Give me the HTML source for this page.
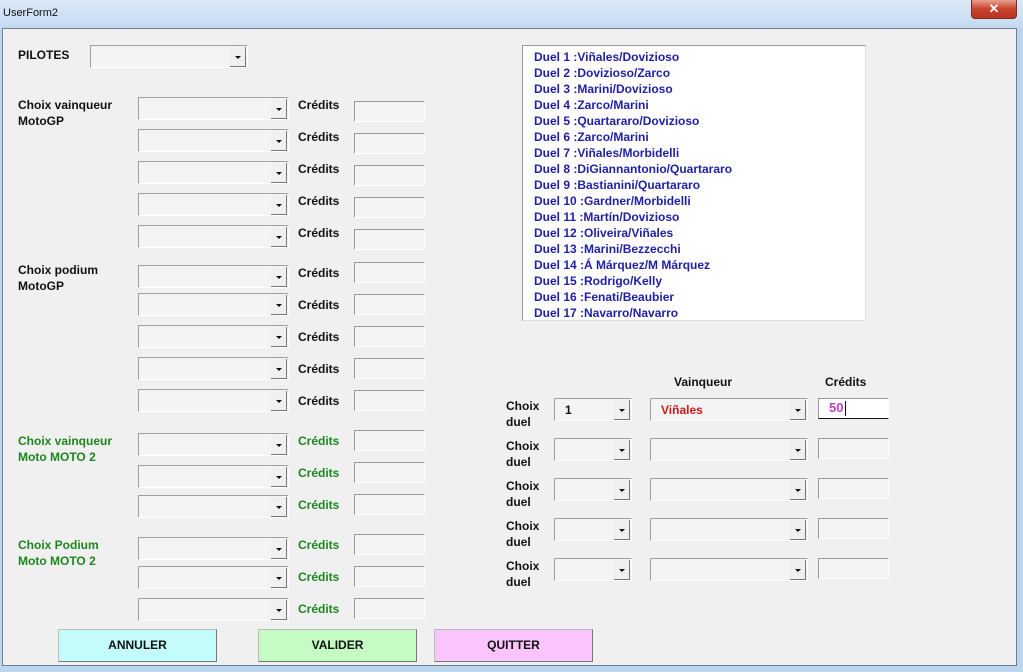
<!DOCTYPE html>
<html><head><meta charset="utf-8"><style>
*{margin:0;padding:0;box-sizing:border-box}
body{width:1023px;height:672px;overflow:hidden;background:#bcd6ee;font-family:"Liberation Sans",sans-serif;position:relative}
.tb{position:absolute;left:0;top:0;width:1023px;height:28px;background:linear-gradient(#dce9f7,#c4daf1)}
.tt{position:absolute;left:3px;top:7px;font-size:11px;color:#111}
.x{position:absolute;left:971px;top:0;width:46px;height:19px;background:linear-gradient(#e8a090,#c8432c 50%,#b83520);border:1px solid #7a2a20;border-top:none;border-radius:0 0 4px 4px;color:#fff;font-weight:bold;font-size:13px;text-align:center;line-height:17px}
.f{position:absolute;left:2px;top:28px;width:1015px;height:638px;background:#f0f0f0;border:1px solid #6e7f92}
.l{position:absolute;font-weight:bold;font-size:12px;color:#111;line-height:16px}
.g{color:#1d861d}
.c{position:absolute;height:23px;background:#f4f4f4;border-top:1px solid #a0a0a0;border-left:1px solid #a0a0a0;border-bottom:1px solid #fff;border-right:1px solid #fff}
.c::after{content:"";position:absolute;right:1px;top:1px;width:15px;height:19px;background:#f0f0f0;border-right:1px solid #777;border-bottom:1px solid #777}
.c::before{content:"";position:absolute;right:6px;top:10px;border-left:3px solid transparent;border-right:3px solid transparent;border-top:3px solid #111;z-index:2}
.t{position:absolute;width:71px;height:21px;background:#f4f4f4;border-top:1px solid #999;border-left:1px solid #999;border-bottom:1px solid #fff;border-right:1px solid #fff}
.lb{position:absolute;left:519px;top:16px;width:344px;height:276px;background:#fff;border:1px solid #999;border-right-color:#ddd;border-bottom-color:#ddd;padding:3px 0 0 11px}
.lb div{font-weight:bold;font-size:12px;color:#1e1ea6;line-height:16px;white-space:nowrap}
.b{position:absolute;top:600px;width:159px;height:33px;border:1px solid #bbb;border-right-color:#777;border-bottom-color:#777;font-weight:bold;font-size:12px;text-align:center;line-height:31px;color:#111}
</style></head><body>
<div class="tb"><div class="tt">UserForm2</div><div class="x">✕</div></div>
<div class="f">
<div class="l" style="left:15px;top:18px">PILOTES</div>
<div class="c" style="left:87px;top:16px;width:158px"></div>

<div class="l" style="left:15px;top:68px">Choix vainqueur<br>MotoGP</div>
<div class="l" style="left:15px;top:233px">Choix podium<br>MotoGP</div>
<div class="l g" style="left:15px;top:404px">Choix vainqueur<br>Moto MOTO 2</div>
<div class="l g" style="left:15px;top:508px">Choix Podium<br>Moto MOTO 2</div>

<div class="c" style="left:135px;top:68px;width:151px"></div><div class="l" style="left:295px;top:68px">Crédits</div><div class="t" style="left:351px;top:72px"></div>
<div class="c" style="left:135px;top:100px;width:151px"></div><div class="l" style="left:295px;top:100px">Crédits</div><div class="t" style="left:351px;top:104px"></div>
<div class="c" style="left:135px;top:132px;width:151px"></div><div class="l" style="left:295px;top:132px">Crédits</div><div class="t" style="left:351px;top:136px"></div>
<div class="c" style="left:135px;top:164px;width:151px"></div><div class="l" style="left:295px;top:164px">Crédits</div><div class="t" style="left:351px;top:168px"></div>
<div class="c" style="left:135px;top:196px;width:151px"></div><div class="l" style="left:295px;top:196px">Crédits</div><div class="t" style="left:351px;top:200px"></div>

<div class="c" style="left:135px;top:236px;width:151px"></div><div class="l" style="left:295px;top:236px">Crédits</div><div class="t" style="left:351px;top:233px"></div>
<div class="c" style="left:135px;top:264px;width:151px"></div><div class="l" style="left:295px;top:268px">Crédits</div><div class="t" style="left:351px;top:265px"></div>
<div class="c" style="left:135px;top:296px;width:151px"></div><div class="l" style="left:295px;top:300px">Crédits</div><div class="t" style="left:351px;top:297px"></div>
<div class="c" style="left:135px;top:328px;width:151px"></div><div class="l" style="left:295px;top:332px">Crédits</div><div class="t" style="left:351px;top:329px"></div>
<div class="c" style="left:135px;top:360px;width:151px"></div><div class="l" style="left:295px;top:364px">Crédits</div><div class="t" style="left:351px;top:361px"></div>

<div class="c" style="left:135px;top:404px;width:151px"></div><div class="l g" style="left:295px;top:404px">Crédits</div><div class="t" style="left:351px;top:401px"></div>
<div class="c" style="left:135px;top:436px;width:151px"></div><div class="l g" style="left:295px;top:436px">Crédits</div><div class="t" style="left:351px;top:433px"></div>
<div class="c" style="left:135px;top:466px;width:151px"></div><div class="l g" style="left:295px;top:468px">Crédits</div><div class="t" style="left:351px;top:465px"></div>

<div class="c" style="left:135px;top:508px;width:151px"></div><div class="l g" style="left:295px;top:508px">Crédits</div><div class="t" style="left:351px;top:505px"></div>
<div class="c" style="left:135px;top:537px;width:151px"></div><div class="l g" style="left:295px;top:540px">Crédits</div><div class="t" style="left:351px;top:537px"></div>
<div class="c" style="left:135px;top:569px;width:151px"></div><div class="l g" style="left:295px;top:572px">Crédits</div><div class="t" style="left:351px;top:569px"></div>

<div class="lb">
<div>Duel 1 :Viñales/Dovizioso</div><div>Duel 2 :Dovizioso/Zarco</div><div>Duel 3 :Marini/Dovizioso</div><div>Duel 4 :Zarco/Marini</div><div>Duel 5 :Quartararo/Dovizioso</div><div>Duel 6 :Zarco/Marini</div><div>Duel 7 :Viñales/Morbidelli</div><div>Duel 8 :DiGiannantonio/Quartararo</div><div>Duel 9 :Bastianini/Quartararo</div><div>Duel 10 :Gardner/Morbidelli</div><div>Duel 11 :Martín/Dovizioso</div><div>Duel 12 :Oliveira/Viñales</div><div>Duel 13 :Marini/Bezzecchi</div><div>Duel 14 :Á Márquez/M Márquez</div><div>Duel 15 :Rodrigo/Kelly</div><div>Duel 16 :Fenati/Beaubier</div><div>Duel 17 :Navarro/Navarro</div>
</div>

<div class="l" style="left:671px;top:345px">Vainqueur</div>
<div class="l" style="left:822px;top:345px">Crédits</div>

<div class="l" style="left:503px;top:369px">Choix<br>duel</div>
<div class="c" style="left:551px;top:369px;width:78px"><span class="l" style="left:10px;top:3px">1</span></div>
<div class="c" style="left:647px;top:369px;width:158px"><span class="l" style="left:10px;top:3px;color:#d01818">Viñales</span></div>
<div class="t" style="left:815px;top:369px;width:71px;background:#fff;border-bottom:1px solid #111"><span class="l" style="left:10px;top:1px;color:#c040c0;font-weight:bold;font-size:13px">50</span><span style="position:absolute;left:26px;top:2px;width:1px;height:15px;background:#111"></span></div>

<div class="l" style="left:503px;top:409px">Choix<br>duel</div>
<div class="c" style="left:551px;top:409px;width:78px"></div><div class="c" style="left:647px;top:409px;width:158px"></div><div class="t" style="left:815px;top:409px"></div>
<div class="l" style="left:503px;top:449px">Choix<br>duel</div>
<div class="c" style="left:551px;top:449px;width:78px"></div><div class="c" style="left:647px;top:449px;width:158px"></div><div class="t" style="left:815px;top:449px"></div>
<div class="l" style="left:503px;top:489px">Choix<br>duel</div>
<div class="c" style="left:551px;top:489px;width:78px"></div><div class="c" style="left:647px;top:489px;width:158px"></div><div class="t" style="left:815px;top:489px"></div>
<div class="l" style="left:503px;top:529px">Choix<br>duel</div>
<div class="c" style="left:551px;top:529px;width:78px"></div><div class="c" style="left:647px;top:529px;width:158px"></div><div class="t" style="left:815px;top:529px"></div>

<div class="b" style="left:55px;background:#c4fcfc">ANNULER</div>
<div class="b" style="left:255px;background:#c4fcc4">VALIDER</div>
<div class="b" style="left:431px;background:#fcc4fc">QUITTER</div>
</div>
</body></html>
